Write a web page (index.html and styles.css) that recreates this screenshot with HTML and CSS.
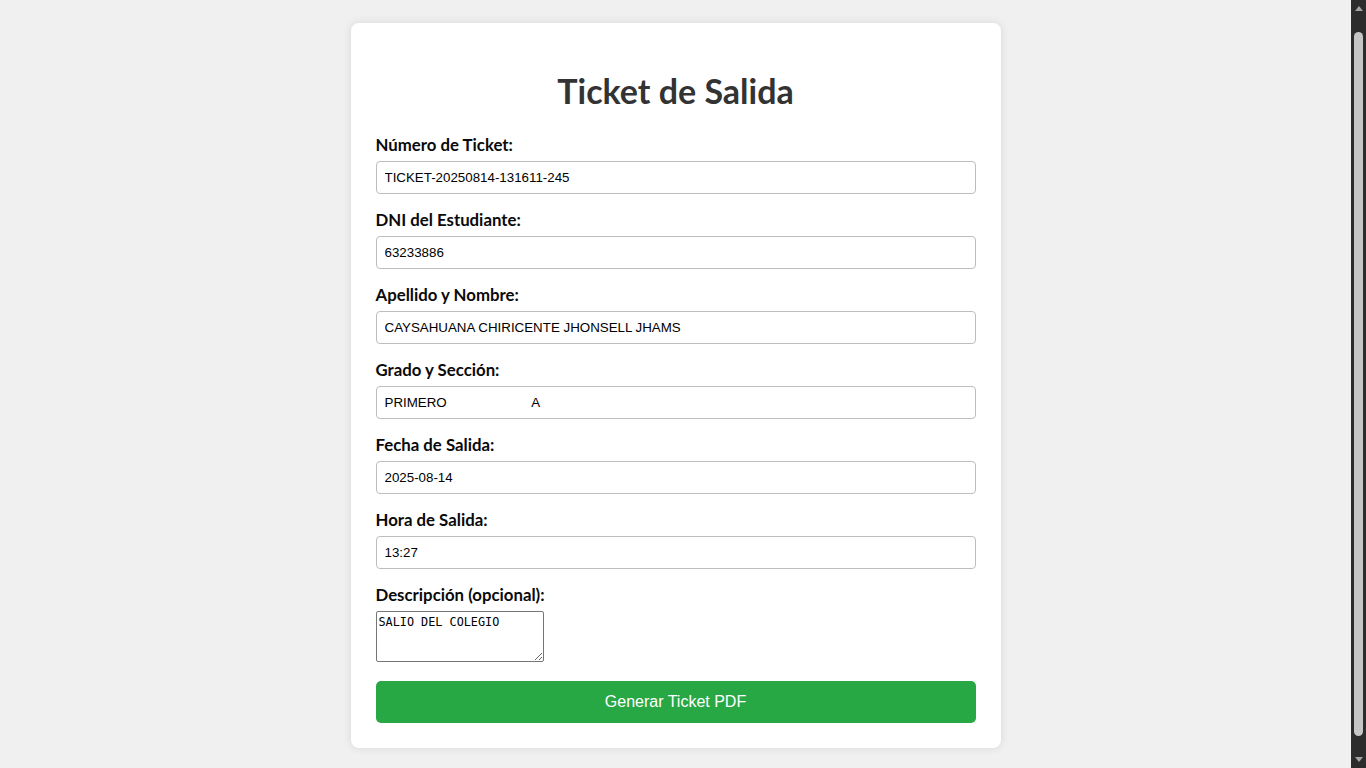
FILE: index.html
```html
<!DOCTYPE html>
<html lang="es">
<head>
<meta charset="utf-8">
<title>Ticket de Salida</title>
<link rel="stylesheet" href="styles.css">
</head>
<body>
<div class="card">
  <h1 class="title">Ticket de Salida</h1>
  <form class="form">
    <label class="label">Número de Ticket:</label>
    <input class="field" type="text" value="TICKET-20250814-131611-245">
    <label class="label">DNI del Estudiante:</label>
    <input class="field" type="text" value="63233886">
    <label class="label">Apellido y Nombre:</label>
    <input class="field" type="text" value="CAYSAHUANA CHIRICENTE JHONSELL JHAMS">
    <label class="label">Grado y Sección:</label>
    <input class="field" type="text" value="PRIMERO                       A">
    <label class="label">Fecha de Salida:</label>
    <input class="field" type="text" value="2025-08-14">
    <label class="label">Hora de Salida:</label>
    <input class="field" type="text" value="13:27">
    <label class="label">Descripción (opcional):</label>
    <textarea class="desc">SALIO DEL COLEGIO</textarea>
    <button class="btn" type="button">Generar Ticket PDF</button>
  </form>
</div>
<div class="scrollbar" aria-hidden="true">
  <span class="arrow arrow-up"></span>
  <span class="thumb"></span>
  <span class="arrow arrow-down"></span>
</div>
</body>
</html>
```

FILE: styles.css
```css
html {
  background: #f0f0f0;
}
body {
  margin: 0;
  padding: 23px 15px 60px 0;
  background: #f0f0f0;
  font-family: Lato, "Open Sans", sans-serif;
}
.card {
  width: 600px;
  margin: 0 auto;
  padding: 25px;
  background: #ffffff;
  border-radius: 8px;
  box-shadow: 0 0 10px rgba(0, 0, 0, 0.1);
}
.title {
  margin: 21px 0 21px;
  text-align: center;
  font-size: 34px;
  line-height: 44px;
  font-weight: 700;
  color: #333333;
}
.form {
  display: flex;
  flex-direction: column;
}
.label {
  display: block;
  margin-bottom: 6px;
  font-size: 16.8px;
  line-height: 21px;
  font-weight: 700;
  color: #0a0a0a;
}
.field {
  box-sizing: border-box;
  width: 100%;
  height: 33px;
  margin: 0 0 15px;
  padding: 0 8px;
  border: 1px solid #bdbdbd;
  border-radius: 4px;
  font-family: "Liberation Sans", Arial, sans-serif;
  font-size: 13.33px;
  color: #000000;
  background: #ffffff;
  white-space: pre;
}
.desc {
  box-sizing: border-box;
  width: 168px;
  height: 51px;
  margin: 0 0 19px;
  padding: 3px 2px 2px;
  border: 1px solid #767676;
  border-radius: 2px;
  font-family: "DejaVu Sans Mono", monospace;
  font-size: 11.8px;
  line-height: 15px;
  color: #000000;
  resize: both;
}
.btn {
  width: 100%;
  height: 42px;
  border: none;
  border-radius: 5px;
  background: #28a745;
  color: #ffffff;
  font-family: "Liberation Sans", Arial, sans-serif;
  font-size: 16px;
}
.scrollbar {
  position: fixed;
  top: 0;
  right: 0;
  width: 15px;
  height: 100vh;
  background: #2c2c2c;
  display: flex;
  flex-direction: column;
  align-items: center;
}
.arrow {
  width: 0;
  height: 0;
  border-left: 4px solid transparent;
  border-right: 4px solid transparent;
}
.arrow-up {
  margin: 6px 0 0;
  border-bottom: 5px solid #a3a3a3;
}
.arrow-down {
  margin: 0 0 6px;
  border-top: 5px solid #a3a3a3;
}
.thumb {
  flex: 1;
  width: 9px;
  margin: 21px 0 21px;
  background: #c6c6c6;
  border-radius: 5px;
}
```
